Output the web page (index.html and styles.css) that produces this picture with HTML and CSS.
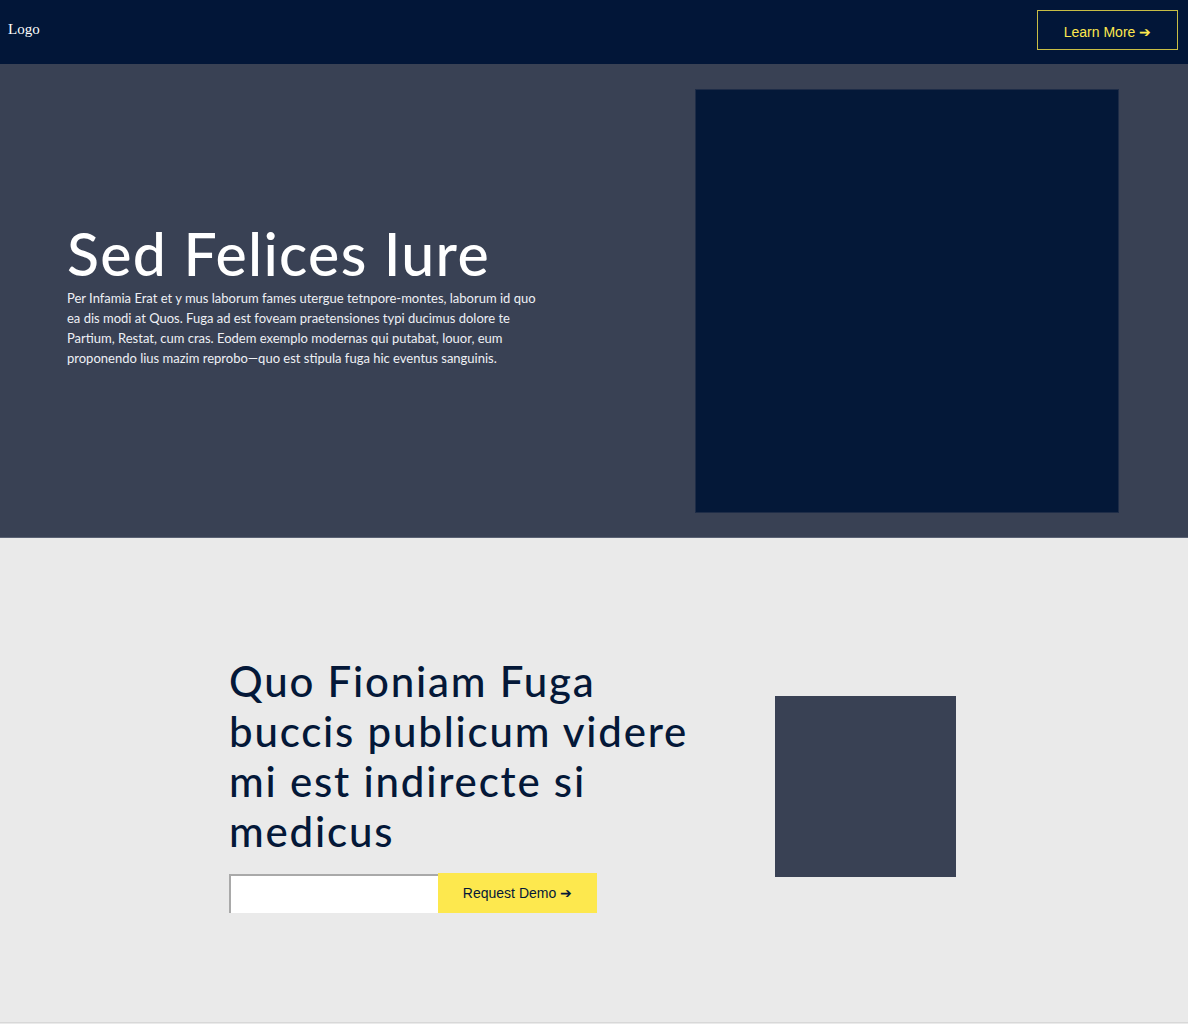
FILE: index.html
```html
<!DOCTYPE html>
<html>
<head>
<meta charset="utf-8">
<link rel="stylesheet" href="styles.css">
</head>
<body>
<header class="topbar">
  <div class="logo">Logo</div>
  <a class="learn-btn" href="#">Learn More ➔</a>
</header>
<section class="hero">
  <div class="hero-text">
    <h1 class="hero-title">Sed Felices Iure</h1>
    <p class="hero-copy">Per Infamia Erat et y mus laborum fames utergue tetnpore-montes, laborum id quo ea dis modi at Quos. Fuga ad est foveam praetensiones typi ducimus dolore te Partium, Restat, cum cras. Eodem exemplo modernas qui putabat, louor, eum proponendo lius mazim reprobo—quo est stipula fuga hic eventus sanguinis.</p>
  </div>
  <div class="hero-image"></div>
</section>
<section class="cta">
  <div class="cta-text">
    <h2 class="cta-title">Quo Fioniam Fuga buccis publicum videre mi est indirecte si medicus</h2>
    <form class="cta-form">
      <input class="cta-input" type="text">
      <button class="cta-btn" type="button">Request Demo ➔</button>
    </form>
  </div>
  <div class="cta-image"></div>
</section>
</body>
</html>
```
FILE: styles.css
```css
* { box-sizing: border-box; }
html, body { margin: 0; padding: 0; }
body { background: #eaeaea; width: 1188px; }

.topbar {
  height: 64px;
  background: #021638;
  display: flex;
  justify-content: space-between;
  align-items: flex-start;
  padding: 0 10px 0 8px;
}
.logo {
  font-family: "Liberation Serif", serif;
  font-size: 15px;
  color: #ffffff;
  margin-top: 21px;
}
.learn-btn {
  margin-top: 10px;
  width: 141px;
  height: 40px;
  border: 1px solid #c8bd45;
  color: #fde84e;
  font-family: "Liberation Sans", Arial, sans-serif;
  font-size: 14px;
  text-decoration: none;
  display: flex;
  align-items: center;
  justify-content: center;
  padding-top: 3px;
}

.hero {
  height: 474px;
  background: #394154;
  border-bottom: 1px solid #5a6274;
  display: flex;
  align-items: center;
  padding: 0 69px 0 67px;
  justify-content: space-between;
}
.hero-text { width: 480px; margin-top: -10px; }
.hero-title {
  font-family: "Lato", sans-serif;
  font-weight: 500;
  font-size: 59px;
  line-height: 60px;
  color: #ffffff;
  margin: 0 0 4px 0;
  letter-spacing: 1.3px;
}
.hero-copy {
  font-family: "Lato", sans-serif;
  font-size: 13px;
  line-height: 20px;
  color: #eef0f4;
  margin: 0;
}
.hero-image {
  width: 424px;
  height: 424px;
  background: #041838;
  border: 1px solid #1e2c47;
  margin-top: 1px;
}

.cta {
  height: 485px;
  background: #eaeaea;
  border-bottom: 1px solid #d8d8d8;
  display: flex;
  align-items: center;
  padding: 0 0 0 229px;
}
.cta-text { width: 490px; margin-top: 9px; }
.cta-title {
  font-family: "Lato", sans-serif;
  font-weight: 500;
  font-size: 42px;
  line-height: 50px;
  letter-spacing: 1.8px;
  color: #041838;
  margin: 0 0 17px 0;
}
.cta-form { display: flex; align-items: flex-end; }
.cta-input {
  width: 209px;
  height: 39px;
  border: none;
  border-top: 2px solid #a9a9a9;
  border-left: 2px solid #a9a9a9;
  background: #ffffff;
  margin: 0;
  padding: 0;
}
.cta-btn {
  width: 159px;
  height: 40px;
  border: none;
  background: #fde84e;
  color: #041838;
  font-family: "Liberation Sans", Arial, sans-serif;
  font-size: 14px;
  margin: 0;
  padding: 0;
}
.cta-image {
  width: 181px;
  height: 181px;
  background: #394154;
  margin-left: 56px;
  margin-top: 13px;
}
```
